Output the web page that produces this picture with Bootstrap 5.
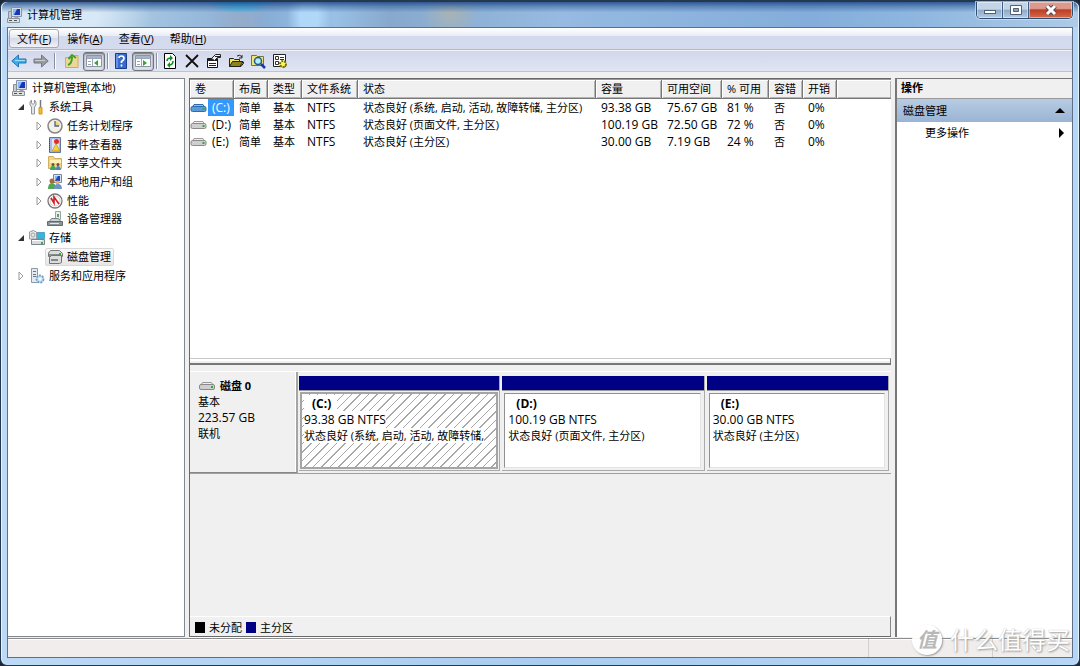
<!DOCTYPE html>
<html lang="zh-CN">
<head>
<meta charset="utf-8">
<meta name="viewport" content="width=device-width, initial-scale=1">
<title>计算机管理</title>
<link href="https://cdn.jsdelivr.net/npm/bootstrap@5.3.0/dist/css/bootstrap.min.css" rel="stylesheet">
<style>
:root{--line:#828790;--face:#f0f0f0}
body{font-family:"Open Sans","Noto Sans CJK SC",sans-serif;font-size:11px;line-height:16px;color:#000;background:#1b2636}
button{font:inherit;color:inherit;background:none;border:0;padding:0;line-height:inherit}
svg{flex:none;display:block}
.ico{width:16px;height:16px}
.win{min-height:100vh;padding:0 6px 7px;border:1px solid #25384f;border-width:2px 1px 1px;border-radius:7px;
 background:linear-gradient(90deg,#bcd9f5,#a9cdf0 50%,#b5d6f6);box-shadow:inset 1px 0 #e6f2fc,inset -1px 0 #e6f2fc}
.titlebar{height:25px;margin:0 -5px;padding-left:5px;border-radius:6px 6px 0 0;background:
 linear-gradient(180deg,#164281cc 0,#2c5a9680 18%,#ffffff00 42%),
 radial-gradient(ellipse 22px 38px at 307px 60%,#b5dbfcdd 40%,#b5dbfc00 100%),
 radial-gradient(ellipse 34px 12px at 238px 0,#49bfe8 40%,#49bfe800 100%),
 radial-gradient(ellipse 30px 34px at 238px 70%,#9aa9c4aa 10%,#9aa9c400 100%),
 radial-gradient(ellipse 28px 30px at 448px 40%,#a5b3b7 10%,#a5b3b700 100%),
 radial-gradient(ellipse 90px 40px at 60px 60%,#d7e8f6 40%,#d7e8f600 100%),
 linear-gradient(90deg,#c2daef 0,#a3c3e0 14%,#86acd5 24%,#9ac0e6 31%,#87a9cd 36%,#96bae1 52%,#84addb 75%,#8cb5df 84%,#aecbe7)}
.titlebar h1{font-size:11px;line-height:16px;font-weight:400}
.caption{height:17px;margin-right:5px;border:1px solid #2f4c70;border-top:0;border-radius:0 0 5px 5px;box-shadow:0 0 0 1px #d9e8f7aa;overflow:hidden}
.caption button{width:26px;height:16px;display:grid;place-items:center;background:linear-gradient(#c3d4e7 45%,#8fa9c7 50%,#b3cbe3);border-right:1px solid #405f86;box-shadow:inset 0 0 0 1px #ffffff70}
.caption .close{width:43px;border:0;background:linear-gradient(#dc9a8c 40%,#bb3f26 50%,#d46b4a)}
.client{border:1px solid #5c7087;background:var(--face)}
.menus{height:22px;padding-left:1px;background:linear-gradient(#fff,#e9edf6 36%,#d4daed 40%,#d5daee);border-bottom:1px solid #b5bac9}
.menus button{height:19px;margin-top:1px;padding:0 7px;border:1px solid transparent;border-radius:3px}
.menus .on{border-color:#a4a8b5;background:linear-gradient(#fff,#e5e7ef 45%,#d6d9e5 50%,#f0f2f8)}
.tools{height:22px;border-top:1px solid #f1f2f4;border-bottom:1px solid #bdc3d2;background:linear-gradient(#d2d7eb,#e0e5f4)}
.tools button{height:19px;width:22px;display:grid;place-items:center}
.tools .on{border:1px solid #6e7480;border-radius:3px;background:#dcdfe6;box-shadow:inset 0 1px 2px #666}
.sep{width:1px;height:16px;background:#8b90a0;box-shadow:1px 0 #fff;margin:0 2px}
.work{padding-top:6px;gap:4px}
.side{width:177px;background:#fff;border:1px solid var(--line);border-left:0}
.tree{display:grid;grid-auto-rows:1fr;height:206px}
.tree li{display:flex;align-items:center;padding-left:2px}
.tree .l1{padding-left:8px}.tree .l2{padding-left:26px}.tree .leaf{padding-left:37px}
.tree button{display:flex;align-items:center;gap:4px;padding:0 2px 0 1px;border:1px solid transparent;border-radius:2px;height:18px;white-space:nowrap}
.tree .sel{border-color:#d9d9d9;background:linear-gradient(#fafafa,#e6e6e6)}
.arrow{width:10px;height:10px;margin-right:1px}
.center{min-width:0;border:1px solid #696969;border-width:1px 0 1px 1px;box-shadow:0 1px #fff;background:var(--face)}
.volumes{flex:0 0 279px;background:#fff;border-top:1px solid #999;overflow:hidden}
.volumes table{table-layout:fixed;width:100%;border-collapse:separate;border-spacing:0;white-space:nowrap}
.volumes th{height:19px;padding:0 5px;font-weight:400;line-height:16px;background:var(--face);border-right:1px solid #777;border-bottom:1px solid #777;box-shadow:inset 1px 1px #fff,inset -1px -1px #b5b5b5}
.volumes th:last-child{border-right:0}
.volumes td{height:17px;line-height:14px;padding:0 0 0 5px}
.volumes td.lat,.volumes td:first-child{font-size:12px}
.volumes td:first-child{padding:0}
.volumes .lab{padding:0 3px;line-height:15px;margin-left:1px;border:1px solid transparent}
.volumes .picked{background:#3399ff;color:#fff;border:1px dotted #c07030}
.chosen{--top:#8fc0ee;--body:#5a9bdc;--edge:#2f6cab}
.split{height:7px;border-top:1px solid #c8c8c8;border-right:1px solid #777;border-bottom:2px solid #777;background:linear-gradient(#fff 2px,#f0f0f0 2px)}
.disk{margin-top:6px;height:103px;border-top:1px solid #fff;border-bottom:1px solid #a0a0a0}
.disklabel{width:108px;border-right:2px solid #a5a5a5;border-bottom:1px solid #888;padding:6px 8px;box-shadow:inset -1px 0 #fff}
.lat{font-size:12px}
.parts{display:grid;grid-template-columns:201fr 202fr 182fr;gap:2px;padding:4px 2px 4px 1px}
.part{min-width:0;background:#f0f0f0;border-right:1px solid #aaa;border-bottom:1px solid #aaa}
.part .band{height:15px;background:#000084;border-bottom:1px solid #999}
.vol{height:75px;margin:2px 3px 2px 2px;border:1px solid #909090;border-right-color:#e4e4e4;border-bottom-color:#e4e4e4;background:#fff;padding:2px 3px;overflow:hidden;white-space:nowrap}
.hatched{border:2px solid #a5a5a5;margin:1px 1px;height:77px;padding:2px;background:repeating-linear-gradient(135deg,#fff 0 5px,#a8a8a8 5px 6px)}
.vol div>span{background:#fff}
.vol .name{font-size:12px;font-weight:700;padding:0 6px 0 8px}
.legend{height:20px;border-top:1px solid #fff;border-right:1px solid #888;padding:2px 0 0 5px;gap:4px}
.swatch{width:10px;height:11px}
.primary{background:#000084}
.actions{width:177px;background:#fff;border-left:2px solid #777;border-top:1px solid #777}
.actions h2{font-size:11px;font-weight:700;line-height:18px;height:20px;margin:0;padding-left:4px;background:var(--face);border-bottom:1px solid #999}
.group{height:23px;padding:0 7px 0 6px;background:linear-gradient(#b8cce4,#99b4d3)}
.more{height:22px;padding:0 7px 0 28px}
.status{height:19px;margin-top:1px;border-top:1px solid #8c8c8c;background:#f0edec;box-shadow:inset 0 1px #fff}
.status i{width:124px;border-left:1px solid #d4d0d0}
.status i+i{width:80px}
.stamp{position:absolute;right:9px;bottom:8px;color:#fff;font-size:24px;line-height:34px;text-shadow:1px 1px 2px #999,0 0 1px #bbb;pointer-events:none}
.stamp b{width:30px;height:30px;border-radius:50%;background:#fffffff0;color:#b8b8b8;font:italic 700 20px/28px "Noto Sans CJK SC",sans-serif;text-align:center;text-shadow:none;box-shadow:1px 1px 2px #999}
</style>
</head>
<body>
<svg width="0" height="0" class="position-absolute" aria-hidden="true"><defs>
<symbol id="pc" viewBox="0 0 16 16"><path fill="#d7dce3" stroke="#8994a5" d="M4.5.5h10v9h-10z"/><path fill="#1936b8" d="M6 2h7v6H6z"/><path fill="#83bcff" d="M6 2h4L7 8H6z"/><path fill="#9ca6b2" d="M8 10h3l2 2H6z"/><path fill="#dde2dc" stroke="#8a949a" d="M.5 11.500h12v4H.5z"/><path stroke="#45535f" d="M2 13.500h3m2 0h3"/><path fill="#c5cbd0" stroke="#87919a" d="M1.500 4.500h3v7h-3z"/></symbol>
<symbol id="tools" viewBox="0 0 16 16"><path fill="#e3e7e9" stroke="#8f979b" d="M2.500 1v3L4 5.500 5.500 4V1L7 3v3L5.500 8v7h-3V8L1 6V3z"/><path stroke="#727a80" stroke-width="1.500" d="M11.500 1v7"/><path fill="#f9bd2f" stroke="#d99018" d="M10 8.500h3V15h-3z"/></symbol>
<symbol id="clock" viewBox="0 0 16 16"><circle cx="8" cy="8" r="7" fill="#f3f0e8" stroke="#858585" stroke-width="1.500"/><path fill="#f2d28a" d="M8 8V3a5 5 0 0 1 5 5z"/><path fill="none" stroke="#456887" stroke-width="1.300" d="M8 3v5h4"/></symbol>
<symbol id="event" viewBox="0 0 16 16"><path fill="#a9bce0" stroke="#6077a5" d="M2.500.5h11v15h-11z"/><path fill="#dfe6f3" d="M5 2h7v12H5z"/><circle cx="9.500" cy="4.500" r="2.500" fill="#e12c27"/><path fill="#ffcf38" stroke="#ad8424" stroke-width=".6" d="m9 7 4 7H5z"/><path stroke="#3b486c" stroke-dasharray="1 1" d="M2.500 2v13"/></symbol>
<symbol id="share" viewBox="0 0 16 16"><path fill="#f4d67f" stroke="#ceb060" d="M1.500 1.500h5l1 2h7v10h-13z"/><path fill="#fff0b6" d="M3 5h11v3H3z"/><circle cx="6" cy="9.500" r="1.500" fill="#745039"/><circle cx="11" cy="9.500" r="1.500" fill="#745039"/><path fill="#3da661" d="M3 15q0-4 3-4t3 4z"/><path fill="#4a83c8" d="M9 15q0-4 2-4t3 4z"/></symbol>
<symbol id="users" viewBox="0 0 16 16"><path fill="#d9e1ea" stroke="#7a8795" d="M6.500.5h8v8h-8z"/><path fill="#2143bb" d="M8 2h5v5H8z"/><path fill="#86b8f3" d="M8 2h3L8 7z"/><circle cx="5" cy="7" r="2.500" fill="#a36c42"/><circle cx="10.500" cy="8.500" r="2" fill="#dfae72"/><path fill="#54a653" d="M1 15q0-6 4-6t4 6z"/><path fill="#6e94c7" d="M7 15q0-5 4-5t4 5z"/></symbol>
<symbol id="perf" viewBox="0 0 16 16"><circle cx="8" cy="8" r="7" fill="#fff" stroke="#777" stroke-width="1.300"/><circle cx="8" cy="8" r="5" fill="none" stroke="#bbb" stroke-width=".7"/><path fill="none" stroke="#d51b20" stroke-width="1.600" d="m4 5 3 5V4l5 7"/></symbol>
<symbol id="device" viewBox="0 0 16 16"><path fill="#e9edf0" stroke="#9aa4ab" d="M8.500.5h5v8h-5z"/><path fill="#60a35b" d="M10 3h2v3h-2z"/><path fill="#c9cfd2" stroke="#7a8489" d="M4.500 7.500h7l3 4h-13z"/><path fill="#8a9499" stroke="#626c71" d="M.5 10.500h15v4H.5z"/><path stroke="#e3e9eb" d="M3 12.500h9"/></symbol>
<symbol id="storage" viewBox="0 0 16 16"><path fill="#35b6df" stroke="#54a4c4" d="M7 2.500h8.500v6H7z"/><path fill="#e4e8ea" stroke="#939da3" d="M.5 2q4-3 7 0v7h-7z"/><circle cx="4" cy="5" r="2" fill="none" stroke="#9da6ac"/><path fill="#d7dbdd" stroke="#7b858c" d="M2.500 9.500h13v5h-13z"/><path fill="#3caf43" d="M12 12h2v2h-2z"/><path stroke="#fff" d="M3 10.500h10"/></symbol>
<symbol id="diskmg" viewBox="0 0 16 16"><path fill="#d9dcda" stroke="#777" d="m3.500 1.500 9 0 3 3v3h-14V4z"/><path fill="#888e8c" d="M2 5h12v2H2z"/><path fill="#ddd" stroke="#707574" d="m2.500 8.500 2-2h10v7l-2 1H2.500z"/><path stroke="#828987" stroke-width="2" d="M4 11h7"/><path fill="#42a641" d="M12 4h2v2h-2z"/></symbol>
<symbol id="services" viewBox="0 0 16 16"><path fill="#e5eaf0" stroke="#8a98ab" d="M2.500.5h6v14h-6z"/><path stroke="#65778f" d="M4 3.500h3m-3 3h3m-3 2h3"/><circle cx="11" cy="11" r="3.500" fill="#c5e0f6" stroke="#6e9fc8" stroke-width="1.800" stroke-dasharray="2 1"/><circle cx="11" cy="11" r="1.500" fill="#fff"/></symbol>
<symbol id="drive" viewBox="0 0 16 10"><path fill="var(--top,#eee)" stroke="var(--edge,#999)" d="M3.500 1.500h9l2 3h-13z"/><rect x=".5" y="3.500" width="15" height="5" rx="1.500" fill="var(--body,#cfcfcf)" stroke="var(--edge,#8a8a8a)"/><path fill="#2fac35" d="M12 5h2v2h-2z"/></symbol>
<symbol id="open" viewBox="0 0 10 10"><path d="M8 2v6H2z" fill="#333"/></symbol>
<symbol id="shut" viewBox="0 0 10 10"><path d="m3 1 4 4-4 4z" fill="#fff" stroke="#999"/></symbol>
<symbol id="pane" viewBox="0 0 16 16"><path fill="#fff" stroke="#8a95a5" d="M.5 2.500h15v11H.5z"/><path fill="#a2b5ce" d="M1 3h14v2H1z"/><path stroke="#9ba7b6" d="M1 5.500h14M6.500 6v7M2 8.500h3m-3 3h3"/></symbol>
</defs></svg>
<div class="win d-flex flex-column position-relative">
 <header class="titlebar d-flex justify-content-between">
  <div class="d-flex align-items-center gap-1"><svg class="ico"><use href="#pc"/></svg><h1 class="m-0">计算机管理</h1></div>
  <div class="caption d-flex">
   <button aria-label="最小化"><svg width="12" height="10"><rect x=".5" y="5.500" width="11" height="3" fill="#fff" stroke="#526075"/></svg></button>
   <button aria-label="最大化"><svg width="12" height="10"><path fill="#fff" stroke="#526075" d="M.5.5h11v9H.5z"/><path fill="#91a4bd" stroke="#526075" d="M3.500 3.500h5v3h-5z"/></svg></button>
   <button class="close" aria-label="关闭"><svg width="12" height="10"><path stroke="#5d4148" stroke-width="5" d="m2 1 8 8m0-8-8 8"/><path stroke="#fff" stroke-width="3" d="m2 1 8 8m0-8-8 8"/></svg></button>
  </div>
 </header>
 <div class="client flex-grow-1 d-flex flex-column">
  <nav class="menus d-flex align-items-start" aria-label="菜单">
   <button class="on">文件(<u>F</u>)</button><button>操作(<u>A</u>)</button><button>查看(<u>V</u>)</button><button>帮助(<u>H</u>)</button>
  </nav>
  <div class="tools d-flex align-items-center" role="toolbar" aria-label="工具栏">
   <button aria-label="后退"><svg class="ico" viewBox="0 0 16 16"><path fill="#36b2ee" stroke="#2474b5" d="m.8 8 6.700-6v4H15v4H7.500v4z"/><path stroke="#9de3ff" d="M4 7.500h10"/></svg></button>
   <button aria-label="前进"><svg class="ico" viewBox="0 0 16 16"><path fill="#999da1" stroke="#73797f" d="M15.200 8 8.500 2v4H1v4h7.500v4z"/><path stroke="#c9cccf" d="M2 7.500h10"/></svg></button>
   <span class="sep"></span>
   <button class="ms-1" aria-label="上一级"><svg class="ico" viewBox="0 0 16 16"><path fill="#efd694" stroke="#cdac62" d="M1.500 4.500H8l1-2h5v12H1.500z"/><path fill="none" stroke="#37a528" stroke-width="2" d="M4 12c3-1 4-4 4-8M4.500 6 8 2l4 3"/></svg></button>
   <button class="on" aria-label="控制台树"><svg class="ico"><use href="#pane"/><path fill="#32a82f" d="M12 7v6l-4-3z"/></svg></button>
   <span class="sep"></span>
   <button aria-label="帮助"><svg class="ico" viewBox="0 0 16 16"><path fill="#376acb" stroke="#173e91" d="M2.500.5h11v15h-11z"/><path stroke="#9abafa" d="M4 1v14"/><path fill="none" stroke="#fff" stroke-width="1.700" d="M6 5q0-2 2.500-2T11 5.500q0 1.500-2.500 3V10m0 1.500v2"/></svg></button>
   <button class="on" aria-label="操作窗格"><svg class="ico"><use href="#pane"/><path fill="#32a82f" d="m8 7 4 3-4 3z"/></svg></button>
   <span class="sep"></span>
   <button aria-label="刷新"><svg class="ico" viewBox="0 0 16 16"><path fill="#fff" stroke="#000" d="M2.500.5h8l3 3v12h-11z"/><path fill="none" stroke="#168b25" stroke-width="1.600" d="M5 8q0-3 4-3m2 3q0 4-4 4"/><path fill="#168b25" d="m8 2 3 3-3 3zM8 9v6l-3-3z"/></svg></button>
   <button aria-label="删除"><svg class="ico" viewBox="0 0 16 16"><path stroke="#111" stroke-width="1.800" d="m2 2 12 12M14 2 2 14"/></svg></button>
   <button aria-label="属性"><svg class="ico" viewBox="0 0 16 16"><path fill="#fff" stroke="#111" d="M1.500 5.500h10v9h-10z"/><path fill="#222" d="M2 6h9v2H2z"/><path fill="#eee" stroke="#222" d="m5.500 5.500 4-4h5v3h-3l-3 3z"/><path stroke="#222" d="M3 10.500h7m-7 2h7M9 3.500h6"/></svg></button>
   <button aria-label="打开"><svg class="ico" viewBox="0 0 16 16"><path fill="#f4e56a" stroke="#222" d="M1.500 13.500V5.500h4l1 1h5v3H16l-3 4z"/><path fill="#8d8418" stroke="#222" d="m1.500 13.500 3-5H15l-3 5z"/><path fill="none" stroke="#222" d="M9 3q3-2 5 1m0-2v3h-3"/></svg></button>
   <button aria-label="查找"><svg class="ico" viewBox="0 0 16 16"><path fill="#efe677" stroke="#77733c" d="M1.500 2.500h5l1 1h6v9h-12z"/><circle cx="8" cy="8" r="3.500" fill="#aeeefd" stroke="#245a83" stroke-width="1.500"/><path stroke="#1837a5" stroke-width="2.500" d="m11 11 4 4"/></svg></button>
   <button aria-label="设置"><svg class="ico" viewBox="0 0 16 16"><path fill="#fff" stroke="#222" d="M1.500 1.500h12v12h-12z"/><path fill="none" stroke="#333" d="M3.500 3.500h3v3h-3zm0 5h3v3h-3zM8 4.500h4m-4 2h4"/><circle cx="11" cy="11" r="3" fill="#fff45a" stroke="#756f00" stroke-width="2" stroke-dasharray="2 1"/></svg></button>
  </div>
  <main class="work flex-grow-1 d-flex">
   <aside class="side flex-shrink-0">
    <ul class="tree list-unstyled m-0">
     <li><button><svg class="ico"><use href="#pc"/></svg>计算机管理(本地)</button></li>
     <li class="l1"><svg class="arrow"><use href="#open"/></svg><button><svg class="ico"><use href="#tools"/></svg>系统工具</button></li>
     <li class="l2"><svg class="arrow"><use href="#shut"/></svg><button><svg class="ico"><use href="#clock"/></svg>任务计划程序</button></li>
     <li class="l2"><svg class="arrow"><use href="#shut"/></svg><button><svg class="ico"><use href="#event"/></svg>事件查看器</button></li>
     <li class="l2"><svg class="arrow"><use href="#shut"/></svg><button><svg class="ico"><use href="#share"/></svg>共享文件夹</button></li>
     <li class="l2"><svg class="arrow"><use href="#shut"/></svg><button><svg class="ico"><use href="#users"/></svg>本地用户和组</button></li>
     <li class="l2"><svg class="arrow"><use href="#shut"/></svg><button><svg class="ico"><use href="#perf"/></svg>性能</button></li>
     <li class="leaf"><button><svg class="ico"><use href="#device"/></svg>设备管理器</button></li>
     <li class="l1"><svg class="arrow"><use href="#open"/></svg><button><svg class="ico"><use href="#storage"/></svg>存储</button></li>
     <li class="leaf"><button class="sel"><svg class="ico"><use href="#diskmg"/></svg>磁盘管理</button></li>
     <li class="l1"><svg class="arrow"><use href="#shut"/></svg><button><svg class="ico"><use href="#services"/></svg>服务和应用程序</button></li>
    </ul>
   </aside>
   <section class="center flex-grow-1 d-flex flex-column">
    <div class="volumes">
     <table>
      <colgroup><col style="width:44px"><col style="width:34px"><col style="width:34px"><col style="width:56px"><col style="width:238px"><col style="width:66px"><col style="width:60px"><col style="width:47px"><col style="width:34px"><col style="width:34px"><col></colgroup>
      <thead><tr><th>卷</th><th>布局</th><th>类型</th><th>文件系统</th><th>状态</th><th>容量</th><th>可用空间</th><th>% 可用</th><th>容错</th><th>开销</th><th></th></tr></thead>
      <tbody>
       <tr><td><div class="d-flex align-items-center"><svg class="chosen" width="17" height="10"><use href="#drive"/></svg><span class="lab picked">(C:)</span></div></td><td>简单</td><td>基本</td><td class="lat">NTFS</td><td>状态良好 (系统, 启动, 活动, 故障转储, 主分区)</td><td class="lat">93.38 GB</td><td class="lat">75.67 GB</td><td class="lat">81 %</td><td>否</td><td class="lat">0%</td><td></td></tr>
       <tr><td><div class="d-flex align-items-center"><svg width="17" height="10"><use href="#drive"/></svg><span class="lab">(D:)</span></div></td><td>简单</td><td>基本</td><td class="lat">NTFS</td><td>状态良好 (页面文件, 主分区)</td><td class="lat">100.19 GB</td><td class="lat">72.50 GB</td><td class="lat">72 %</td><td>否</td><td class="lat">0%</td><td></td></tr>
       <tr><td><div class="d-flex align-items-center"><svg width="17" height="10"><use href="#drive"/></svg><span class="lab">(E:)</span></div></td><td>简单</td><td>基本</td><td class="lat">NTFS</td><td>状态良好 (主分区)</td><td class="lat">30.00 GB</td><td class="lat">7.19 GB</td><td class="lat">24 %</td><td>否</td><td class="lat">0%</td><td></td></tr>
      </tbody>
     </table>
    </div>
    <div class="split"></div>
    <div class="disk d-flex">
     <div class="disklabel flex-shrink-0">
      <div class="d-flex align-items-center gap-1"><svg width="18" height="10"><use href="#drive"/></svg><b>磁盘 0</b></div>
      <div>基本</div><div class="lat">223.57 GB</div><div>联机</div>
     </div>
     <div class="parts flex-grow-1">
      <div class="part"><div class="band"></div><div class="vol hatched"><div><span class="name">(C:)</span></div><div class="lat"><span>93.38 GB NTFS</span></div><div><span>状态良好 (系统, 启动, 活动, 故障转储,</span></div></div></div>
      <div class="part"><div class="band"></div><div class="vol"><div><span class="name">(D:)</span></div><div class="lat"><span>100.19 GB NTFS</span></div><div><span>状态良好 (页面文件, 主分区)</span></div></div></div>
      <div class="part"><div class="band"></div><div class="vol"><div><span class="name">(E:)</span></div><div class="lat"><span>30.00 GB NTFS</span></div><div><span>状态良好 (主分区)</span></div></div></div>
     </div>
    </div>
    <div class="legend mt-auto d-flex align-items-center"><span class="swatch bg-black"></span>未分配<span class="swatch primary"></span>主分区</div>
   </section>
   <aside class="actions flex-shrink-0">
    <h2>操作</h2>
    <button class="group w-100 d-flex justify-content-between align-items-center">磁盘管理<svg width="10" height="6"><path d="m5 0 5 5H0z"/></svg></button>
    <button class="more w-100 d-flex justify-content-between align-items-center">更多操作<svg width="6" height="10"><path d="m0 0 5 5-5 5z"/></svg></button>
   </aside>
  </main>
  <footer class="status d-flex justify-content-end"><i></i><i></i></footer>
 </div>
 <div class="stamp d-flex align-items-center gap-2"><b>值</b><span>什么值得买</span></div>
</div>
<script src="https://cdn.jsdelivr.net/npm/bootstrap@5.3.0/dist/js/bootstrap.bundle.min.js"></script>
</body>
</html>
